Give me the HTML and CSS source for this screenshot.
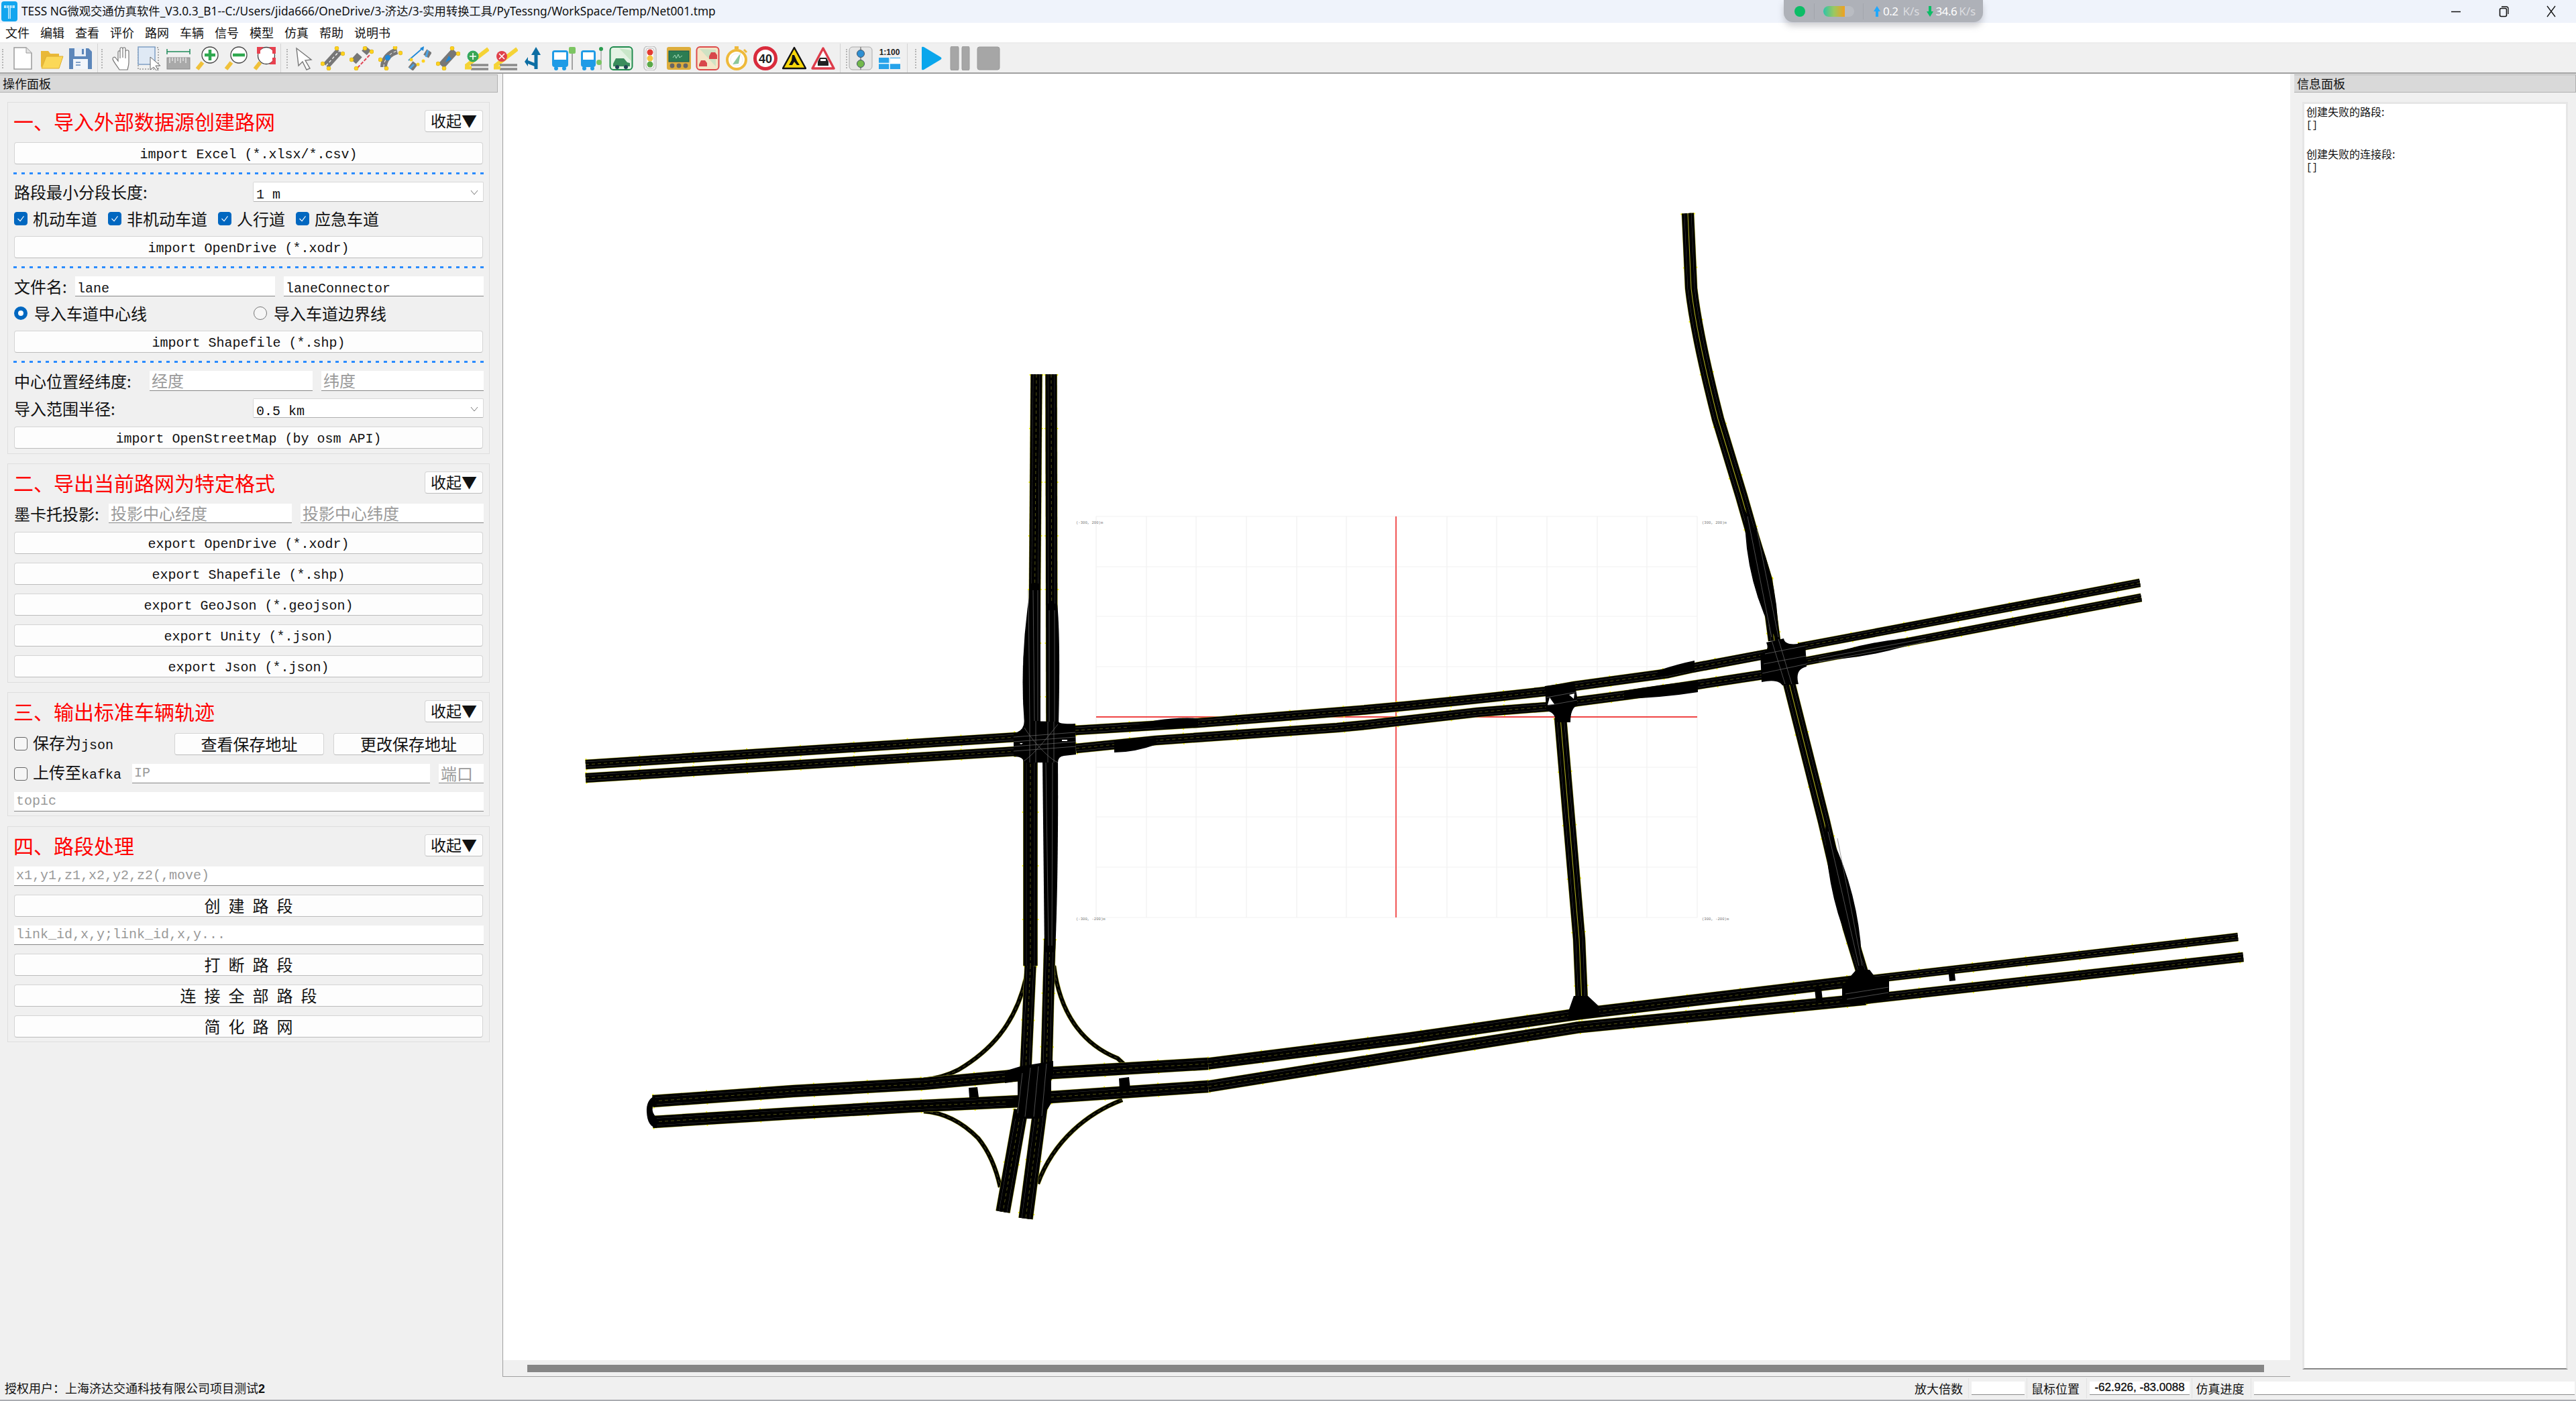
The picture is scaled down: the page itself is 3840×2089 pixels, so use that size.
FILE: index.html
```html
<!DOCTYPE html>
<html lang="zh-CN">
<head>
<meta charset="utf-8">
<title>TESS NG</title>
<link rel="stylesheet" href="styles.css">
</head>
<body>
<div class="app">
  <header class="titlebar">
    <svg class="applogo" width="24" height="30" viewBox="0 0 24 30"><rect width="24" height="30" rx="4" fill="#12a5ef"/><path d="M4 6H20V10H14V26H10V10H4Z" fill="#bfe8fb"/><path d="M8 6V12M12 6V26M16 6V12" stroke="#12a5ef" stroke-width="1"/></svg>
    <span class="wintitle">TESS NG微观交通仿真软件_V3.0.3_B1--C:/Users/jida666/OneDrive/3-济达/3-实用转换工具/PyTessng/WorkSpace/Temp/Net001.tmp</span>
    <div class="winctl">
      <svg width="16" height="16" viewBox="0 0 16 16"><path d="M1 8.5H15" stroke="#111" stroke-width="1.5"/></svg>
      <svg width="16" height="18" viewBox="0 0 16 18"><rect x="2.5" y="4.5" width="10" height="12" rx="2" fill="none" stroke="#111" stroke-width="1.6"/><path d="M5 2H12Q15 2 15 5V13" fill="none" stroke="#111" stroke-width="1.3"/></svg>
      <svg width="16" height="18" viewBox="0 0 16 18"><path d="M2 1L14 17M14 1L2 17" stroke="#111" stroke-width="1.3"/></svg>
    </div>
    <div class="netwidget">
      <i class="nw-dot"></i><i class="nw-sep"></i><i class="nw-pill"><b></b></i><i class="nw-sep"></i>
      <svg class="nw-arrow" width="14" height="20" viewBox="0 0 14 20"><path d="M7 2L12 10H9V18H5V10H2Z" fill="#20a8ff"/></svg><span class="nw-val">0.2</span><span class="nw-unit">K/s</span>
      <svg class="nw-arrow nw-second" width="14" height="20" viewBox="0 0 14 20"><path d="M7 18L12 10H9V2H5V10H2Z" fill="#0bbd66"/></svg><span class="nw-val">34.6</span><span class="nw-unit nw-tight">K/s</span>
    </div>
  </header>

  <nav class="menubar">
    <span>文件</span><span>编辑</span><span>查看</span><span>评价</span><span>路网</span><span>车辆</span><span>信号</span><span>模型</span><span>仿真</span><span>帮助</span><span>说明书</span>
  </nav>

  <div class="toolbar">
    <div class="tgroup g1">
      <svg class="ti" viewBox="0 0 36 36"><path d="M5 2H23L31 10V34H5Z" fill="#fff" stroke="#9a9a9a" stroke-width="1.5"/><path d="M23 2V10H31" fill="#e4e4e4" stroke="#9a9a9a"/></svg>
      <svg class="ti" viewBox="0 0 36 36"><path d="M2 30V7H13L16 11H29V15H11L3 32Z" fill="#e9b838"/><path d="M3 33L10 15H35L29 33Z" fill="#fbd858" stroke="#dfae30"/></svg>
      <svg class="ti" viewBox="0 0 36 36"><path d="M1 3H30L35 8V34H1Z" fill="#5c86ba"/><rect x="9" y="2" width="17" height="13" fill="#e8eef6"/><rect x="20" y="4" width="3" height="8" fill="#5c86ba"/><rect x="7" y="19" width="22" height="15" fill="#f2f6fb"/><path d="M11 24H18M11 28H18" stroke="#5c86ba" stroke-width="1.5"/></svg>
    </div>
    <div class="tgroup g2">
      <svg class="ti" viewBox="0 0 36 36"><path transform="translate(4 0)" d="M12 35C9 30 3 23 2 19C2 16 5 15 7 18L10 22V9C10 6 13 6 13 9V18V4C13 1 17 1 17 4V17V4C17 1 21 1 21 4V18V8C21 5 26 5 26 8V24C26 28 25 31 24 35Z" fill="#fff" stroke="#777" stroke-width="1.2"/></svg>
      <svg class="ti" viewBox="0 0 36 36"><rect x="1" y="2" width="30" height="32" fill="none" stroke="#666" stroke-width="1" stroke-dasharray="2 2"/><rect x="1" y="1" width="25" height="26" fill="#dfe9f5" stroke="#7f9fc4" stroke-width="1.5"/><path d="M19 16L34 29L27 29L31 36L28 36L24 31L19 35Z" fill="#fff" stroke="#666"/></svg>
      <svg class="ti" viewBox="0 0 36 36"><path d="M1 4V12M35 4V12M1 8H35" stroke="#1f8a5a" stroke-width="1.5"/><rect x="1" y="17" width="34" height="17" fill="#a9a9a9" stroke="#8a8a8a"/><path d="M5 17V25M9 17V22M13 17V25M17 17V22M21 17V25M25 17V22M29 17V25" stroke="#fff"/></svg>
      <svg class="ti" viewBox="0 0 36 36"><path d="M11 24L3 34" stroke="#f0c13a" stroke-width="6"/><circle cx="22" cy="13" r="12" fill="#fff" stroke="#444" stroke-width="1.3"/><path d="M22 5V21M14 13H30" stroke="#2fa84f" stroke-width="4.5"/></svg>
      <svg class="ti" viewBox="0 0 36 36"><path d="M11 24L3 34" stroke="#f0c13a" stroke-width="6"/><circle cx="22" cy="13" r="12" fill="#fff" stroke="#444" stroke-width="1.3"/><path d="M13 13H31" stroke="#2fa84f" stroke-width="4.5"/></svg>
      <svg class="ti" viewBox="0 0 36 36"><path d="M11 24L3 34" stroke="#f0c13a" stroke-width="6"/><circle cx="20" cy="14" r="12.5" fill="#fff" stroke="#444" stroke-width="1.3"/><path d="M6 1H16L11 6V11H6ZM24 1H34V11H29V6ZM34 17V27H24L29 22V17Z" fill="#e8414f"/></svg>
    </div>
    <div class="tgroup g3">
      <svg class="ti" viewBox="0 0 36 36"><path d="M7 3L29 20L20 21L27 33L22 35L16 23L10 29Z" fill="#fff" stroke="#777" stroke-width="1.4"/></svg>
      <svg class="ti" viewBox="0 0 36 36"><path d="M8 29L28 7" stroke="#777" stroke-width="11"/><path d="M8 29L28 7" stroke="#fff" stroke-width="1.3" stroke-dasharray="4 3"/><g fill="#ffd21f" stroke="#c9a100" stroke-width=".5"><circle cx="3" cy="26" r="3"/><circle cx="12" cy="33" r="3"/><circle cx="24" cy="3" r="3"/><circle cx="33" cy="11" r="3"/></g></svg>
      <svg class="ti" viewBox="0 0 36 36"><path d="M6 23L15 13M22 10L28 3" stroke="#777" stroke-width="10"/><path d="M12 32L31 12" stroke="#e14656" stroke-width="2" stroke-dasharray="5 2"/><g fill="#ffd21f" stroke="#c9a100" stroke-width=".5"><circle cx="3" cy="20" r="3"/><circle cx="10" cy="33" r="3"/><circle cx="23" cy="3" r="3"/><circle cx="33" cy="8" r="3"/></g></svg>
      <svg class="ti" viewBox="0 0 36 36"><path d="M8 31C8 20 16 10 28 7" fill="none" stroke="#777" stroke-width="10"/><path d="M8 31C8 20 16 10 28 7" fill="none" stroke="#fff" stroke-dasharray="4 3"/><circle cx="14" cy="17" r="4" fill="#1e88d8"/><g fill="#ffd21f" stroke="#c9a100" stroke-width=".5"><circle cx="3" cy="20" r="3"/><circle cx="12" cy="33" r="3"/><circle cx="25" cy="2" r="3"/><circle cx="33" cy="10" r="3"/></g></svg>
      <svg class="ti" viewBox="0 0 36 36"><path d="M5 34L12 25M28 15L33 7" stroke="#777" stroke-width="9"/><path d="M2 21L24 2" stroke="#1e88d8" stroke-width="1.8"/><path d="M25 0L24 7L19 3Z" fill="#1e88d8"/><path d="M28 16L31 6" stroke="#4aa3e6" stroke-width="3"/><path d="M4 33L10 27" stroke="#4aa3e6" stroke-width="3"/><g fill="#ffd21f"><circle cx="6" cy="20" r="2.5"/><circle cx="16" cy="27" r="2.5"/><circle cx="24" cy="22" r="2.5"/></g></svg>
      <svg class="ti" viewBox="0 0 36 36"><path d="M8 29L28 7" stroke="#777" stroke-width="11"/><path d="M14 24L23 19L19 14Z" fill="#1e88d8"/><g fill="#ffd21f" stroke="#c9a100" stroke-width=".5"><circle cx="3" cy="26" r="3"/><circle cx="12" cy="33" r="3"/><circle cx="24" cy="3" r="3"/><circle cx="33" cy="11" r="3"/></g></svg>
      <svg class="ti" viewBox="0 0 36 36"><path d="M1 30L35 4" stroke="#f5d335" stroke-width="6"/><path d="M9 28H35M9 34H35" stroke="#8a8a8a" stroke-width="3.5"/><circle cx="12" cy="15" r="8" fill="#3aa655" stroke="#2a6"/><path d="M12 10V20M7 15H17" stroke="#fff" stroke-width="1.6"/><path d="M0 32H10" stroke="#f5d335" stroke-width="5"/></svg>
      <svg class="ti" viewBox="0 0 36 36"><path d="M1 30L35 4" stroke="#f5d335" stroke-width="6"/><path d="M9 28H35M9 34H35" stroke="#8a8a8a" stroke-width="3.5"/><circle cx="12" cy="15" r="8" fill="#e0404a"/><path d="M8 11L16 19M16 11L8 19" stroke="#fff" stroke-width="1.6"/><path d="M0 32H10" stroke="#f5d335" stroke-width="5"/></svg>
      <svg class="ti" viewBox="0 0 36 36"><path d="M20 34V10" stroke="#0d6ea3" stroke-width="5"/><path d="M20 1L27 13H13Z" fill="#0d6ea3"/><path d="M18 25L8 21V16L3 23L8 30V26L18 30Z" fill="#0d6ea3"/></svg>
      <svg class="ti" viewBox="0 0 36 36"><rect x="1" y="6" width="24" height="25" rx="4" fill="#1f9be6"/><rect x="4" y="9" width="18" height="11" fill="#fff"/><circle cx="7" cy="33" r="3" fill="#1f9be6"/><circle cx="19" cy="33" r="3" fill="#1f9be6"/><path d="M31 10V35" stroke="#888" stroke-width="1.5"/><rect x="26" y="1" width="10" height="10" rx="2" fill="#7cc562"/></svg>
      <svg class="ti" viewBox="0 0 36 36"><rect x="1" y="6" width="22" height="25" rx="4" fill="#1f9be6"/><rect x="4" y="9" width="16" height="11" fill="#fff"/><circle cx="6" cy="33" r="3" fill="#1f9be6"/><circle cx="18" cy="33" r="3" fill="#1f9be6"/><path d="M31 5V35" stroke="#888"/><circle cx="31" cy="4" r="3" fill="#2b9c4f"/><circle cx="28" cy="24" r="4" fill="#7cc562"/></svg>
      <svg class="ti" viewBox="0 0 36 36"><rect x="1.5" y="1" width="33" height="34" rx="5" fill="#e4f3e4" stroke="#1e8a4c" stroke-width="2"/><path d="M15 3L33 22V6Z" fill="#c9e7c9"/><path d="M6 26L10 18H22L27 24L31 25V30H6Z" fill="#3a8d5c"/><circle cx="12" cy="31" r="3" fill="#245"/><circle cx="25" cy="31" r="3" fill="#245"/></svg>
      <svg class="ti" viewBox="0 0 36 36"><rect x="9" y="0" width="18" height="36" rx="5" fill="#eee" stroke="#aaa"/><rect x="12" y="3" width="12" height="30" rx="4" fill="#fff" stroke="#bbb"/><circle cx="18" cy="9" r="4.5" fill="#e33b33"/><circle cx="18" cy="18" r="4.5" fill="#f2c744"/><circle cx="18" cy="27" r="4.5" fill="#5aa84a"/></svg>
      <svg class="ti" viewBox="0 0 36 36"><rect x="0" y="1" width="36" height="34" rx="3" fill="#ddad3c"/><rect x="3" y="7" width="30" height="16" fill="#2c7d52" stroke="#155"/><path d="M9 17L12 13L14 18L17 12L19 17L23 14" fill="none" stroke="#a5d9b7" stroke-width="1"/><circle cx="8" cy="29" r="3.4" fill="#666"/><circle cx="18" cy="29" r="3.4" fill="#666"/><circle cx="28" cy="29" r="3.4" fill="#666"/></svg>
      <svg class="ti" viewBox="0 0 36 36"><rect x="1.5" y="1" width="33" height="34" rx="5" fill="#f3e6c8" stroke="#dd4a4a" stroke-width="2"/><path d="M6 4L30 30V5Z" fill="#cfe2c3"/><path d="M5 27L8 21H14L17 25L17 30H5Z" fill="#d8474b"/><path d="M20 15L23 9H29L32 13L32 19H20Z" fill="#d8474b"/></svg>
      <svg class="ti" viewBox="0 0 36 36"><circle cx="18" cy="20" r="14" fill="#fff" stroke="#eeb93a" stroke-width="4"/><rect x="15" y="0" width="6" height="4" fill="#eeb93a"/><path d="M29 5L33 9" stroke="#eeb93a" stroke-width="3"/><path d="M12 27L24 10L21 26Z" fill="#8bc79a"/><circle cx="18" cy="20" r="9" fill="none" stroke="#eee"/></svg>
      <svg class="ti" viewBox="0 0 36 36"><circle cx="18" cy="18" r="15.5" fill="#fff" stroke="#d92b3c" stroke-width="5"/><text x="18" y="24.5" class="sign-text">40</text></svg>
      <svg class="ti" viewBox="0 0 36 36"><path d="M18 2L35 33H1Z" fill="#f7d70a" stroke="#111" stroke-width="2.4" stroke-linejoin="round"/><path d="M15 13L18 13L22 22L26 28H22L18 23L15 28H10L14 21Z" fill="#111"/></svg>
      <svg class="ti" viewBox="0 0 36 36"><path d="M18 3L34 33H2Z" fill="#fff" stroke="#dd3b4a" stroke-width="3.4" stroke-linejoin="round"/><path d="M10 23L13 17H23L26 23V29H10Z" fill="#222"/><rect x="14" y="19" width="8" height="3" fill="#fff"/></svg>
    </div>
    <div class="tgroup g4">
      <svg class="ti" viewBox="0 0 36 36"><rect x="1" y="1" width="34" height="34" rx="5" fill="#e6e6e6" stroke="#aaa"/><path d="M18 1V35" stroke="#999" stroke-width="2"/><circle cx="18" cy="11" r="5.5" fill="#2e8fd3" stroke="#456"/><circle cx="18" cy="26" r="5.5" fill="#72b84a" stroke="#456"/></svg>
      <svg class="ti" viewBox="0 0 36 36"><text x="18" y="13" class="scale-text">1:100</text><rect x="2" y="17" width="32" height="17" fill="#27a3ea"/><path d="M18 17V34M2 25.500H34" stroke="#fff" stroke-width="1.5"/><rect x="19" y="18" width="15" height="7" fill="#fff"/></svg>
    </div>
    <div class="tgroup g5">
      <svg class="ti ti-play" viewBox="0 0 36 36"><path d="M4 2Q4 0 7 1L32 16Q35 18 32 20L7 35Q4 36 4 34Z" fill="#0aa6ec"/></svg>
      <svg class="ti ti-pause" viewBox="0 0 36 36"><rect x="7" y="0" width="12" height="36" rx="2.500" fill="#a6a6a6" stroke="#999"/><rect x="24" y="0" width="11" height="36" rx="2.500" fill="#a6a6a6" stroke="#999"/></svg>
      <svg class="ti ti-stop" viewBox="0 0 36 36"><rect x="1" y="1" width="33" height="34" rx="3" fill="#a6a6a6" stroke="#999"/></svg>
    </div>
  </div>

  <main class="main">
    <aside class="leftdock">
      <div class="dockhead">操作面板</div>

      <section class="box box1">
        <div class="boxhead"><h2>一、导入外部数据源创建路网</h2><button class="fold">收起▼</button></div>
        <div class="btn mt15 en">import Excel (*.xlsx/*.csv)</div>
        <div class="dots mt12"></div>
        <div class="row mt11 h30"><span class="label wlab">路段最小分段长度:</span><div class="combo"><span class="en">1 m</span><svg class="chev" width="12" height="8" viewBox="0 0 12 8"><path d="M1 1L6 7L11 1" fill="none" stroke="#777"/></svg></div></div>
        <div class="row mt15 h20">
          <i class="cb on"><svg viewBox="0 0 20 20"><path d="M5 10L9 14L15 6" fill="none" stroke="#fff" stroke-width="1.2"/></svg></i><span class="label cbt w112">机动车道</span>
          <i class="cb on"><svg viewBox="0 0 20 20"><path d="M5 10L9 14L15 6" fill="none" stroke="#fff" stroke-width="1.2"/></svg></i><span class="label cbt w136">非机动车道</span>
          <i class="cb on"><svg viewBox="0 0 20 20"><path d="M5 10L9 14L15 6" fill="none" stroke="#fff" stroke-width="1.2"/></svg></i><span class="label cbt w88">人行道</span>
          <i class="cb on"><svg viewBox="0 0 20 20"><path d="M5 10L9 14L15 6" fill="none" stroke="#fff" stroke-width="1.2"/></svg></i><span class="label cbt">应急车道</span>
        </div>
        <div class="btn mt16 en">import OpenDrive (*.xodr)</div>
        <div class="dots mt12"></div>
        <div class="row mt12 h30"><span class="label w91">文件名:</span><div class="input f298"><span class="en">lane</span></div><div class="input fgrow ml13"><span class="en">laneConnector</span></div></div>
        <div class="row mt15 h20"><i class="rb on"></i><span class="label rbt w327">导入车道中心线</span><i class="rb"></i><span class="label rbt">导入车道边界线</span></div>
        <div class="btn mt16 en">import Shapefile (*.shp)</div>
        <div class="dots mt12"></div>
        <div class="row mt12 h30"><span class="label w202">中心位置经纬度:</span><div class="input f243 ph">经度</div><div class="input fgrow ml13 ph">纬度</div></div>
        <div class="row mt11 h29"><span class="label wlab">导入范围半径:</span><div class="combo"><span class="en">0.5 km</span><svg class="chev" width="12" height="8" viewBox="0 0 12 8"><path d="M1 1L6 7L11 1" fill="none" stroke="#777"/></svg></div></div>
        <div class="btn mt13 en">import OpenStreetMap (by osm API)</div>
      </section>

      <section class="box box2">
        <div class="boxhead"><h2>二、导出当前路网为特定格式</h2><button class="fold">收起▼</button></div>
        <div class="row mt15 h29"><span class="label w141">墨卡托投影:</span><div class="input f273 ph">投影中心经度</div><div class="input fgrow ml13 ph">投影中心纬度</div></div>
        <div class="btn mt13 en">export OpenDrive (*.xodr)</div>
        <div class="btn mt13 en">export Shapefile (*.shp)</div>
        <div class="btn mt13 en">export GeoJson (*.geojson)</div>
        <div class="btn mt13 en">export Unity (*.json)</div>
        <div class="btn mt13 en">export Json (*.json)</div>
      </section>

      <section class="box box3">
        <div class="boxhead"><h2>三、输出标准车辆轨迹</h2><button class="fold">收起▼</button></div>
        <div class="row mt16 h32"><i class="cb"></i><span class="label cbt w211">保存为<span class="en">json</span></span><div class="btn btn223">查看保存地址</div><div class="btn btn224 ml14">更改保存地址</div></div>
        <div class="row mt14 h29"><i class="cb"></i><span class="label cbt w148">上传至<span class="en">kafka</span></span><div class="input f444 ph en-ph">IP</div><div class="input fgrow ml13 ph">端口</div></div>
        <div class="input mt13 h29 ph en-ph">topic</div>
      </section>

      <section class="box box4">
        <div class="boxhead"><h2>四、路段处理</h2><button class="fold">收起▼</button></div>
        <div class="input mt15 h29 ph en-ph">x1,y1,z1,x2,y2,z2(,move)</div>
        <div class="btn mt13 spaced">创 建 路 段</div>
        <div class="input mt13 h29 ph en-ph">link_id,x,y;link_id,x,y...</div>
        <div class="btn mt13 spaced">打 断 路 段</div>
        <div class="btn mt13 spaced">连 接 全 部 路 段</div>
        <div class="btn mt13 spaced">简 化 路 网</div>
      </section>
    </aside>

    <div class="canvasframe">
      <svg class="network" width="2664" height="1918" viewBox="749 110 2664 1918">
        <defs>
          <g id="n14">
            <path d="M872 1140L1515 1099"/>
            <path d="M872 1160L1515 1120"/>
            <path d="M1602 1089L1785 1078L2027 1059Q2170 1046 2302 1031L2346 1023L2486 1004L2522 996L2650 972"/>
            <path d="M1603 1116L1722 1104L1992 1085L2034 1081L2202 1062L2304 1054L2350 1046L2427 1036L2529 1021L2627 1006L2650 1000"/>
            <path d="M2780 1490L3343 1427"/>
          </g>
          <g id="n12">
            <path d="M2680 965L3189 869"/>
            <path d="M2685 987L3191 891"/>
            <path d="M2780 1461L3335 1397"/>
          </g>
          <g id="n19">
            <path d="M972 1642L1181 1627L1376 1616L1520 1603"/>
            <path d="M972 1673L1181 1660L1353 1650L1520 1642"/>
            <path d="M1565 1600L1800 1586"/>
            <path d="M1565 1636L1800 1620"/>
          </g>
          <g id="n17">
            <path d="M1800 1586L2100 1548L2351 1512L2780 1461"/>
            <path d="M1800 1620L2100 1572L2351 1532L2780 1490"/>
            <path d="M1544 558L1540 1080"/>
            <path d="M1566 558L1567 1080"/>
            <path d="M1535 1440L1528 1595"/>
            <path d="M1564 1400L1559 1590"/>
          </g>
          <g id="n21">
            <path d="M1535 1130L1535 1440"/>
            <path d="M1521 1655L1494 1807"/>
            <path d="M1550 1650L1528 1817"/>
          </g>
          <g id="n18">
            <path d="M2515 318L2520 430Q2528 500 2560 625L2595 740L2613 803L2632 865L2644 955"/>
            <path d="M2665 1015L2718 1225L2755 1384L2775 1450"/>
            <path d="M2325 1070L2353 1400L2357 1495"/>
          </g>
          <g id="n6">
            <path d="M1530 1450C1515 1530 1470 1570 1428 1595Q1405 1607 1376 1610"/>
            <path d="M1570 1440C1580 1520 1620 1560 1665 1578L1678 1590"/>
            <path d="M1376 1657Q1420 1660 1457 1697Q1480 1725 1490 1770"/>
            <path d="M1672 1640C1620 1660 1570 1700 1546 1765"/>
          </g>
        </defs>

        <g class="gridlines">
          <path d="M1633 770V1368M1708 770V1368M1782 770V1368M1857 770V1368M1932 770V1368M2006 770V1368M2156 770V1368M2230 770V1368M2305 770V1368M2380 770V1368M2454 770V1368M2529 770V1368"/>
          <path d="M1633 770H2529M1633 845H2529M1633 919H2529M1633 994H2529M1633 1144H2529M1633 1218H2529M1633 1293H2529M1633 1368H2529"/>
        </g>
        <path class="axis" d="M2080 770V1368M1633 1069H2529"/>
        <text class="coord" x="1603" y="781">(-300, 200)m</text>
        <text class="coord" x="2536" y="781">(300, 200)m</text>
        <text class="coord" x="1603" y="1372">(-300, -200)m</text>
        <text class="coord" x="2536" y="1372">(300, -200)m</text>

        <g class="w6"><use href="#n6" class="l-edge"/><use href="#n6" class="l-road"/><use href="#n6" class="l-mid"/></g>
        <g class="w12"><use href="#n12" class="l-dots"/><use href="#n12" class="l-edge"/><use href="#n12" class="l-road"/><use href="#n12" class="l-lane"/><use href="#n12" class="l-lanein"/><use href="#n12" class="l-mid"/></g>
        <g class="w14"><use href="#n14" class="l-dots"/><use href="#n14" class="l-edge"/><use href="#n14" class="l-road"/><use href="#n14" class="l-lane"/><use href="#n14" class="l-lanein"/><use href="#n14" class="l-mid"/></g>
        <g class="w17"><use href="#n17" class="l-dots"/><use href="#n17" class="l-edge"/><use href="#n17" class="l-road"/><use href="#n17" class="l-lane"/><use href="#n17" class="l-lanein"/><use href="#n17" class="l-mid"/></g>
        <g class="w18"><use href="#n18" class="l-dots"/><use href="#n18" class="l-edge"/><use href="#n18" class="l-road"/><use href="#n18" class="l-lane"/><use href="#n18" class="l-lanein"/><use href="#n18" class="l-center"/></g>
        <g class="w19"><use href="#n19" class="l-dots"/><use href="#n19" class="l-edge"/><use href="#n19" class="l-road"/><use href="#n19" class="l-lane"/><use href="#n19" class="l-lanein"/><use href="#n19" class="l-mid"/></g>
        <g class="w21"><use href="#n21" class="l-dots"/><use href="#n21" class="l-edge"/><use href="#n21" class="l-road"/><use href="#n21" class="l-lane"/><use href="#n21" class="l-lanein"/><use href="#n21" class="l-mid"/></g>

        <g class="junction">
          <path d="M2600 760Q2652 853 2650 960Q2598 867 2600 760Z"/>
          <path d="M2720 1230Q2774 1333 2775 1450Q2720 1347 2720 1230Z"/>
          <path d="M1536 870Q1518 980 1526 1080L1550 1080L1550 870Z"/>
          <path d="M1575 900Q1580 950 1577 1080L1560 1080L1560 900Z"/>
          <path d="M1553 1130L1576 1130Q1577 1300 1572 1420L1556 1420Z"/>
          <path d="M1680 1085Q1730 1068 1785 1071L1785 1085Z"/>
          <path d="M1660 1122Q1690 1122 1723 1110L1723 1100L1660 1105Z"/>
          <path d="M2420 1042Q2480 1040 2530 1032L2530 1015Q2480 1020 2420 1030Z"/>
          <path d="M2470 1000Q2500 990 2525 985L2525 1000L2470 1010Z"/>
          <path d="M2700 985Q2793 983 2880 950Q2787 951 2700 985Z"/>
          <path d="M1526 1075L1577 1076Q1578 1080 1602 1079L1603 1125L1585 1127Q1576 1128 1576 1137L1525 1137Q1525 1128 1510 1128L1510 1093Q1525 1091 1526 1075Z"/>
          <path d="M1520 1590L1569 1582L1569 1600L1566 1612L1566 1645L1552 1668L1511 1668L1516 1650L1500 1652L1497 1640L1516 1636L1516 1612L1497 1615L1497 1597Z"/>
          <path d="M2302 1023L2346 1017L2350 1039L2350 1052Q2340 1056 2340 1077L2318 1077Q2318 1062 2304 1060Z"/>
          <path d="M2632 958L2658 952Q2660 965 2690 958L2692 994Q2674 998 2680 1020L2656 1022Q2650 1012 2625 1017L2623 973Q2638 972 2632 958Z"/>
          <path d="M2745 1470L2766 1446L2786 1446L2795 1458L2815 1456L2815 1490L2760 1498L2745 1495Z"/>
          <path d="M2338 1505L2345 1485L2366 1485L2382 1500L2384 1516L2336 1522Z"/>
          <path d="M975 1634Q962 1640 963 1658Q964 1680 978 1682L978 1666Q970 1660 972 1650L978 1648Z"/>
          <path d="M1443 1622L1456 1621L1458 1636L1444 1637Z"/>
          <path d="M1667 1608L1682 1606L1684 1624L1668 1625Z"/>
          <path d="M2704 1474L2714 1473L2716 1492L2706 1493Z"/>
          <path d="M2903 1444L2912 1443L2914 1462L2905 1463Z"/>
        </g>
        <g class="jlines">
          <path d="M2604 770L2640 950M2618 790L2650 950M2724 1240L2770 1440M2738 1250L2775 1440"/>
          <path d="M1532 880L1534 1075M1539 880L1541 1075M1546 880L1546 1075M1563 910L1563 1076M1571 910L1571 1076M1558 1137L1562 1410M1568 1137L1567 1410"/>
          <path d="M2710 982L2870 952M2710 987L2870 957"/>
          <path d="M1510 1099L1602 1092M1510 1106L1602 1099M1510 1113L1602 1106M1510 1120L1603 1113M1534 1075V1137M1543 1075V1137M1561 1076V1137M1570 1076V1137"/>
          <path d="M1526 1085C1535 1100 1560 1130 1576 1137M1576 1080C1560 1100 1540 1125 1525 1135"/>
          <path d="M1523 1600L1516 1660M1535 1592L1527 1665M1547 1590L1540 1665M1559 1586L1552 1664"/>
          <path d="M2304 1040L2348 1032M2306 1052L2350 1044"/>
          <path d="M2630 975L2690 963M2628 990L2692 978M2626 1004L2692 990M2640 955L2660 1020M2650 953L2670 1020"/>
          <path d="M2750 1482L2814 1472M2752 1490L2814 1480"/>
        </g>
        <g class="jgaps">
          <path d="M1519 1108L1524 1108L1521 1110Z"/>
          <path d="M1582 1103L1590 1103L1590 1105L1582 1105Z"/>
          <path d="M2309 1040L2316 1050L2306 1051Z"/>
          <path d="M2338 1036L2346 1034L2345 1042Z"/>
        </g>
      </svg>
      <div class="hscroll"><div class="hthumb"></div></div>
    </div>

    <aside class="rightdock">
      <div class="dockhead rhead">信息面板</div>
      <div class="infobox">
        <p>创建失败的路段:</p>
        <p class="mono">[]</p>
        <p class="blank"></p>
        <p>创建失败的连接段:</p>
        <p class="mono">[]</p>
      </div>
    </aside>
  </main>

  <footer class="status">
    <span class="auth">授权用户：上海济达交通科技有限公司项目测试<b>2</b></span>
    <span class="st-label lab1">放大倍数</span><i class="sep"></i>
    <span class="st-field f79"></span><i class="sep tight"></i>
    <span class="st-label lab2">鼠标位置</span><i class="sep"></i>
    <span class="st-field fval">-62.926, -83.0088</span><i class="sep tight"></i>
    <span class="st-label lab3">仿真进度</span><i class="sep"></i>
    <span class="st-field fprog"></span>
  </footer>
</div>
</body>
</html>
```

FILE: styles.css
```css
* { box-sizing: border-box; }
html, body { margin: 0; padding: 0; }
body { width: 3840px; height: 2089px; overflow: hidden; background: #f0f0f0; color: #111;
  font-family: "Noto Sans CJK SC", "Noto Sans", sans-serif; font-size: 24px; }
.app { display: flex; flex-direction: column; width: 3840px; height: 2089px; }

/* title bar */
.titlebar { position: relative; height: 34px; background: #eff3fb; display: flex; align-items: center; padding-left: 2px; }
.applogo { flex: none; }
.wintitle { margin-left: 6px; font-family: "Noto Sans", "Noto Sans CJK SC", sans-serif; font-size: 17.3px; line-height: 34px; white-space: nowrap; color: #111; }
.winctl { margin-left: auto; display: flex; align-items: center; gap: 55px; padding-right: 29px; }
.netwidget { position: absolute; left: 2659px; top: 0; width: 297px; height: 33px; background: #aeb1b8; border-radius: 0 0 14px 14px; box-shadow: 0 6px 10px rgba(120,120,130,.35); display: flex; align-items: center; padding-left: 16px; font-family: "Noto Sans", sans-serif; color: #fff; font-size: 17px; }
.nw-dot { width: 16px; height: 16px; border-radius: 50%; background: #0bbd66; flex: none; }
.nw-sep { width: 1px; height: 24px; background: #a3a6ad; margin: 0 13px; flex: none; }
.nw-pill { width: 46px; height: 16px; border-radius: 8px; background: #b9bcc2; overflow: hidden; display: block; flex: none; }
.nw-pill b { display: block; width: 32px; height: 16px; background: linear-gradient(90deg,#2ec4a8,#9cc860,#f0a020); }
.nw-arrow { flex: none; }
.nw-second { margin-left: 8px; }
.nw-val { margin-left: 2px; letter-spacing: -.5px; }
.nw-unit { margin-left: 7px; color: #dcdde0; }
.nw-tight { margin-left: 3px; }

/* menu */
.menubar { height: 31px; background: #fff; border-bottom: 2px solid #ececec; display: flex; align-items: center; gap: 16px; padding-left: 8px; font-size: 18px; line-height: 29px; }

/* toolbar */
.toolbar { height: 45px; background: #f0f0f0; border-bottom: 2px solid #a0a0a0; display: flex; align-items: center; }
.tgroup { display: flex; align-items: center; height: 43px; position: relative; flex: none; }
.tgroup::before { content: ""; position: absolute; left: 5px; top: 8px; bottom: 6px; border-left: 2px dotted #b5b5b5; }
.tgroup::after { content: ""; position: absolute; right: 0; top: 0; bottom: 0; border-right: 1px solid #d4d4d4; }
.g1 { width: 146px; padding-left: 16px; }
.g1::before { left: 3px; }
.g2 { width: 273px; padding-left: 16px; }
.g3 { width: 834px; padding-left: 16px; }
.g3::before { left: 8px; }
.g4 { width: 100px; padding-left: 12px; }
.g4::before { left: 8px; }
.g5 { width: 200px; padding-left: 14px; }
.g5::after { display: none; }
.g5::before { left: 11px; }
.ti { width: 36px; height: 36px; margin-right: 7px; flex: none; }
.ti-play { margin-left: 3px; margin-right: 4px; }
.ti-stop { margin-left: 3px; }
.sign-text { font-family: "Liberation Sans", sans-serif; font-size: 18px; font-weight: 700; text-anchor: middle; fill: #222; }
.scale-text { font-family: "Liberation Sans", sans-serif; font-size: 12px; font-weight: 700; text-anchor: middle; fill: #222; }

/* main area */
.main { display: flex; height: 1943px; flex: none; }
.leftdock { width: 749px; flex: none; padding-top: 1px; }
.dockhead { height: 27px; width: 742px; background: #d9d9d9; border: 1px solid #b0b0b0; border-left: 0; font-size: 18px; line-height: 25px; padding-left: 4px; }
.box { width: 719px; margin-left: 11px; border: 1px solid #dedede; padding: 11px 9px 0 9px; display: flex; flex-direction: column; margin-top: 14px; }
.box1 { height: 525px; }
.box2 { height: 327px; }
.box3 { height: 185px; }
.box4 { height: 322px; margin-top: 15px; }
.boxhead { height: 33px; display: flex; justify-content: space-between; align-items: center; flex: none; }
.boxhead h2 { margin: -2px 0 0 -1px; font-size: 30px; font-weight: 400; color: #ff0000; line-height: 36px; white-space: nowrap; }
.fold { width: 87px; height: 33px; padding: 0 0 3px; background: #fdfdfd; border: 1px solid #d4d4d4; border-bottom-color: #bdbdbd; border-radius: 4px; font: 400 23px/28px "Noto Sans CJK SC", sans-serif; color: #111; white-space: nowrap; }

.btn { height: 33px; flex: none; background: #fdfdfd; border: 1px solid #d4d4d4; border-bottom: 1.5px solid #bcbcbc; border-radius: 4px; text-align: center; line-height: 30px; font-size: 24px; white-space: nowrap; }
.btn.en { font-family: "Liberation Mono", monospace; font-size: 20px; padding-top: 3px; }
.spaced { word-spacing: 6.6px; }
.btn223 { width: 223px; }
.btn224 { width: 224px; }

.dots { height: 3px; margin: 0 -2px 0 -1px; flex: none; background: repeating-linear-gradient(90deg, #2b8cff 0 5px, transparent 5px 12px); }
.row { display: flex; align-items: center; flex: none; }
.label { line-height: 28px; white-space: nowrap; flex: none; }
.en { font-family: "Liberation Mono", monospace; font-size: 20px; }
.wlab { width: 356px; }
.w91 { width: 91px; }
.w202 { width: 202px; }
.w141 { width: 141px; }
.w327 { width: 327px; }
.w112 { width: 112px; }
.w136 { width: 136px; }
.w88 { width: 88px; }
.w211 { width: 211px; }
.w148 { width: 148px; }
.combo { position: relative; flex: 1; margin-right: -1px; height: 100%; background: #fff; border: 1px solid #d8d8d8; border-bottom-color: #b0b0b0; border-radius: 2px; padding-left: 4px; line-height: 28px; }
.chev { position: absolute; right: 7px; top: 11px; }
.input { height: 100%; background: #fff; border-bottom: 1.5px solid #868686; padding-left: 3px; line-height: 27px; white-space: nowrap; flex: none; }
.input.mt15, .input.mt13 { margin-right: -1px; }
.fgrow { flex: 1; margin-right: -1px; }
.f298 { width: 298px; }
.f243 { width: 243px; }
.f273 { width: 273px; }
.f444 { width: 444px; }
.ph { color: #9a9a9a; }
.en-ph { font-family: "Liberation Mono", monospace; font-size: 20px; }
.ml13 { margin-left: 13px; }
.ml14 { margin-left: 14px; }
.mt11 { margin-top: 11px; }
.mt12 { margin-top: 12px; }
.mt13 { margin-top: 13px; }
.mt14 { margin-top: 14px; }
.mt15 { margin-top: 15px; }
.mt16 { margin-top: 16px; }
.h20 { height: 20px; }
.h29 { height: 29px; }
.h30 { height: 30px; }
.h32 { height: 32px; }

.cb { width: 20px; height: 20px; border-radius: 4px; border: 1.5px solid #666; background: #f6f6f6; flex: none; display: block; }
.cb.on { background: #0067c0; border-color: #0067c0; }
.cb svg { display: block; width: 100%; height: 100%; }
.cbt { margin-left: 8px; }
.rb { width: 20px; height: 20px; border-radius: 50%; border: 1px solid #777; background: #f6f6f6; flex: none; display: block; }
.rb.on { border: 6px solid #0067c0; background: #fff; }
.rbt { margin-left: 10px; }

/* canvas */
.canvasframe { width: 2665px; flex: none; border-left: 1px solid #a0a0a0; border-bottom: 1px solid #a0a0a0; display: flex; flex-direction: column; }
.network { display: block; background: #fff; flex: none; }
.hscroll { flex: 1; padding: 7px 0 0 36px; }
.hthumb { width: 2589px; height: 11px; background: #868686; }

.gridlines path { fill: none; stroke: #f1f1f1; stroke-width: 1.2; }
.axis { fill: none; stroke: #f04545; stroke-width: 1.8; }
.coord { font-family: "Liberation Mono", monospace; font-size: 5.6px; fill: #777; }

.w6 { --w: 6; }
.w12 { --w: 12; }
.w14 { --w: 14; }
.w17 { --w: 17; }
.w18 { --w: 18; }
.w19 { --w: 18; }
.w21 { --w: 21; }
.l-dots, .l-edge, .l-road, .l-lane, .l-lanein, .l-mid, .l-center { fill: none; stroke-linejoin: round; }
.l-dots { stroke: #ffff00; stroke-width: calc(var(--w) * 1px + 3.5px); stroke-dasharray: 2 78; }
.l-edge { stroke: #b5b52e; stroke-width: calc(var(--w) * 1px + 1px); }
.l-road { stroke: #000; stroke-width: calc(var(--w) * 1px); }
.l-lane { stroke: #505050; stroke-width: calc(var(--w) * .55px + .8px); }
.l-lanein { stroke: #000; stroke-width: calc(var(--w) * .55px); }
.l-mid { stroke: #66661a; stroke-width: .8px; stroke-dasharray: 5 4; }
.l-center { stroke: #a8a81e; stroke-width: 1.1px; }
.junction path { fill: #000; stroke: none; }
.jlines path { fill: none; stroke: #6e6e6e; stroke-width: .7; }
.jgaps path { fill: #fff; stroke: none; }

/* right dock */
.rightdock { flex: 1; padding-top: 1px; padding-left: 6px; }
.rhead { width: 420px; padding-left: 4px; }
.infobox { width: 396px; height: 1890px; margin: 14px 0 0 12px; background: #fff; border: 3px solid #e6e6e6; border-bottom: 2px solid #888; padding: 1px 3px; font-size: 16px; line-height: 21px; }
.infobox p { margin: 0; height: 21px; }
.infobox .mono { font-family: "Liberation Mono", monospace; font-size: 14px; }

/* status bar */
.status { flex: 1; display: flex; align-items: center; border-bottom: 2px solid #a9abb0; font-size: 18px; line-height: 24px; padding-right: 2px; }
.auth { margin-left: 7px; margin-right: auto; white-space: nowrap; }
.auth b { font-family: "Liberation Sans", sans-serif; }
.st-label { text-align: center; white-space: nowrap; flex: none; }
.lab1 { width: 72px; }
.lab2 { width: 76px; }
.lab3 { width: 75px; }
.sep { width: 1px; height: 30px; background: #e2e2e2; margin: 0 4px 0 8px; flex: none; }
.sep.tight { margin-left: 3px; }
.st-field { height: 20px; background: #fff; border-bottom: 1.5px solid #8a8a8a; flex: none; display: block; }
.f79 { width: 79px; }
.fval { width: 149px; font-family: "Liberation Sans", sans-serif; font-size: 17px; line-height: 18px; text-align: center; white-space: nowrap; -webkit-text-stroke: .3px #000; }
.fprog { width: 478px; }
```
